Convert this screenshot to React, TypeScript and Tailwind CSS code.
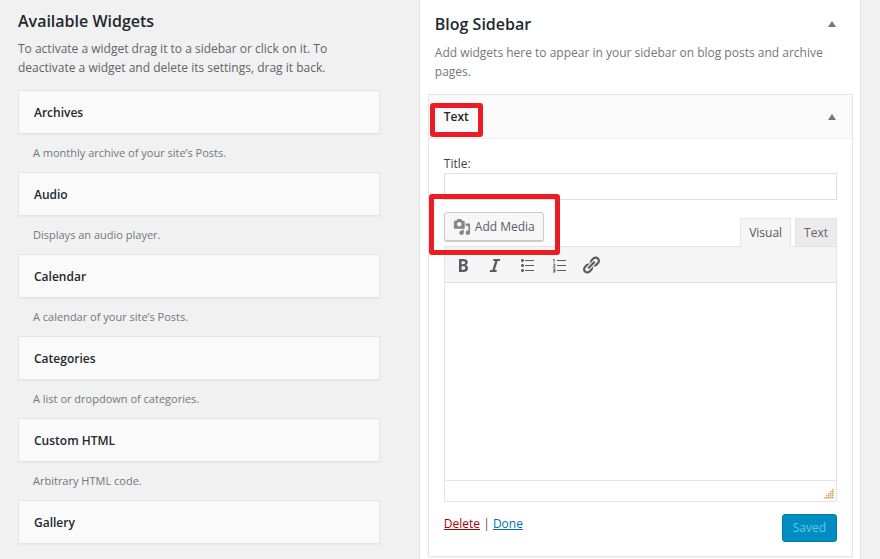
import type { ReactNode } from "react"

const widgets = [
  { name: "Archives", description: "A monthly archive of your site’s Posts." },
  { name: "Audio", description: "Displays an audio player." },
  { name: "Calendar", description: "A calendar of your site’s Posts." },
  { name: "Categories", description: "A list or dropdown of categories." },
  { name: "Custom HTML", description: "Arbitrary HTML code." },
  { name: "Gallery", description: "Displays an image gallery." },
]

const icons = {
  media:
    "M13 11V4c0-.55-.45-1-1-1h-1.67L9 1H5L3.67 3H2c-.55 0-1 .45-1 1v7c0 .55.45 1 1 1h10c.55 0 1-.45 1-1zM7 4.5c1.38 0 2.5 1.12 2.5 2.5S8.38 9.5 7 9.5 4.5 8.38 4.5 7 5.62 4.5 7 4.5zM14 6h5v10.5c0 1.38-1.12 2.5-2.5 2.5S14 17.88 14 16.5s1.12-2.5 2.5-2.5c.17 0 .34.02.5.05V9h-3V6zm-4 8.05V13h2v3.5c0 1.38-1.12 2.5-2.5 2.5S7 17.88 7 16.5 8.12 14 9.5 14c.17 0 .34.02.5.05z",
  bold: "M6 4v13h4.54c1.37 0 2.46-.33 3.26-1 .8-.66 1.2-1.58 1.2-2.77 0-.84-.17-1.51-.51-2.01s-.9-.85-1.67-1.03v-.09c.57-.1 1.02-.4 1.36-.9s.51-1.13.51-1.91c0-1.14-.39-1.98-1.17-2.5C12.75 4.26 11.5 4 9.78 4H6zm2.57 5.15V6.26h1.36c.73 0 1.27.11 1.61.32.34.22.51.58.51 1.07 0 .54-.16.92-.47 1.15s-.82.35-1.51.35h-1.5zm0 2.19h1.6c1.44 0 2.16.53 2.16 1.61 0 .6-.17 1.05-.51 1.34s-.86.43-1.57.43H8.57v-3.38z",
  italic: "M14.78 6h-2.13l-2.8 9h2.12l-.62 2H4.6l.62-2h2.14l2.8-9H8.03l.62-2h6.75z",
  bullets:
    "M5.5 7C4.67 7 4 6.33 4 5.5 4 4.68 4.67 4 5.5 4 6.32 4 7 4.68 7 5.5 7 6.33 6.32 7 5.5 7zM8 5h9v1H8V5zm-2.5 7c-.83 0-1.5-.67-1.5-1.5C4 9.68 4.67 9 5.5 9c.82 0 1.5.68 1.5 1.5 0 .83-.68 1.5-1.5 1.5zM8 10h9v1H8v-1zm-2.5 7c-.83 0-1.5-.67-1.5-1.5 0-.82.67-1.5 1.5-1.5.82 0 1.5.68 1.5 1.5 0 .83-.68 1.5-1.5 1.5zM8 15h9v1H8v-1z",
  numbers:
    "M4.4 4h1.1v3.4h-.9V5h-.6v-.7zM8 5h9v1H8zM4 8.7h2.3v2L5 11.8h1.4v.8H3.9v-.8l1.5-1.4v-.9H4zM8 10h9v1H8zM4 13.6h2.4v3.8H4v-.8h1.5v-.7H4.4v-.8h1.1v-.7H4zM8 15h9v1H8z",
  link: "M17.74 2.76c1.68 1.69 1.68 4.41 0 6.1l-1.53 1.52c-1.12 1.12-2.7 1.47-4.14 1.09l2.62-2.61.76-.77.76-.76c.84-.84.84-2.2 0-3.04-.84-.85-2.2-.85-3.04 0l-.77.76-3.38 3.38c-.37-1.44-.02-3.02 1.1-4.14l1.52-1.53c1.69-1.68 4.42-1.68 6.1 0zM8.59 13.43l5.34-5.34c.42-.42.42-1.1 0-1.52-.44-.43-1.13-.39-1.53 0l-5.33 5.34c-.42.42-.42 1.1 0 1.52.44.43 1.13.39 1.52 0zm-.76 2.29l4.14-4.15c.38 1.44.03 3.02-1.09 4.14l-1.52 1.53c-1.69 1.68-4.41 1.68-6.1 0-1.68-1.68-1.68-4.42 0-6.1l1.53-1.52c1.12-1.12 2.7-1.47 4.14-1.1l-4.14 4.15c-.85.84-.85 2.2 0 3.05.84.84 2.2.84 3.04 0z",
}

const tools = [
  { label: "Bold", path: icons.bold },
  { label: "Italic", path: icons.italic },
  { label: "Bulleted list", path: icons.bullets },
  { label: "Numbered list", path: icons.numbers },
  { label: "Insert link", path: icons.link },
]

function Icon({ path, className }: { path: string; className: string }) {
  return (
    <svg viewBox="0 0 20 20" fill="currentColor" className={className} aria-hidden="true">
      <path d={path} />
    </svg>
  )
}

function Toggle({ label }: { label: string }) {
  return (
    <button type="button" aria-label={label} aria-expanded="true" className="p-1 text-[#72777c]">
      <svg viewBox="0 0 8 6" fill="currentColor" className="h-[6px] w-2">
        <path d="M4 0l4 6H0z" />
      </svg>
    </button>
  )
}

// Red frame drawn around the thing the reader should click
function Highlight({ className, children }: { className: string; children: ReactNode }) {
  return (
    <div className="relative">
      {children}
      <span
        className={`pointer-events-none absolute rounded-[3px] border-5 border-[#ed1c24] ${className}`}
      />
    </div>
  )
}

function AvailableWidgets() {
  return (
    <section className="pt-[9px]">
      <h2 className="text-base leading-6 font-semibold text-[#23282d]">Available Widgets</h2>
      <p className="mt-[6px] max-w-[320px] leading-[19px] text-[#606468]">
        To activate a widget drag it to a sidebar or click on it. To deactivate a widget and delete
        its settings, drag it back.
      </p>
      <ul className="mt-[13px]">
        {widgets.map(widget => (
          <li key={widget.name} className="h-[82px]">
            <h3 className="border border-[#e5e5e5] bg-[#fafafa] px-[15px] pt-3 pb-[10px] leading-5 font-semibold text-[#23282d] shadow-[0_1px_1px_rgba(0,0,0,0.04)]">
              {widget.name}
            </h3>
            <p className="px-[15px] pt-[10px] text-[11px] leading-[18px] text-[#72777c]">
              {widget.description}
            </p>
          </li>
        ))}
      </ul>
    </section>
  )
}

function Editor() {
  return (
    <div>
      <div className="flex items-end justify-between">
        <Highlight className="-top-[18px] -right-4 -bottom-[14px] -left-[15px]">
          <button
            type="button"
            className="flex h-[29px] items-center gap-1 rounded-[3px] border border-[#ccc] bg-[#f7f7f7] px-2 text-[#555d66] shadow-[0_1px_0_#ccc]"
          >
            <Icon path={icons.media} className="h-[18px] w-[18px] text-[#82878c]" />
            Add Media
          </button>
        </Highlight>
        <div className="-mb-[6px] flex gap-1" role="tablist">
          <button
            type="button"
            role="tab"
            aria-selected="true"
            className="relative z-10 h-[29px] border border-b-0 border-[#e5e5e5] bg-[#f5f5f5] px-2 text-[#555]"
          >
            Visual
          </button>
          <button
            type="button"
            role="tab"
            aria-selected="false"
            className="h-7 border border-b-0 border-[#e5e5e5] bg-[#ebebeb] px-2 text-[#666]"
          >
            Text
          </button>
        </div>
      </div>
      <div className="mt-[5px] border border-[#e5e5e5]">
        <div className="flex h-9 items-center gap-3 border-b border-[#dedede] bg-[#f5f5f5] px-2 text-[#555d66]">
          {tools.map(tool => (
            <button key={tool.label} type="button" aria-label={tool.label}>
              <Icon path={tool.path} className="h-5 w-5" />
            </button>
          ))}
        </div>
        <textarea
          aria-label="Widget content"
          className="block h-[197px] w-full resize-none bg-white p-2 outline-none"
        />
        <div className="flex h-[21px] items-end justify-end border-t border-[#e5e5e5] p-[2px]">
          <svg viewBox="0 0 10 10" className="h-[10px] w-[10px]" aria-hidden="true">
            <path d="M8 0h2v10H0V8h2V6h2V4h2V2h2z" fill="#ead9bd" />
            <path
              d="M8 0h1v1H8zM6 2h1v1H6zM8 2h1v1H8zM4 4h1v1H4zM6 4h1v1H6zM8 4h1v1H8zM2 6h1v1H2zM4 6h1v1H4zM6 6h1v1H6zM8 6h1v1H8zM0 8h1v1H0zM2 8h1v1H2zM4 8h1v1H4zM6 8h1v1H6zM8 8h1v1H8z"
              fill="#d9a04e"
            />
          </svg>
        </div>
      </div>
    </div>
  )
}

function TextWidget() {
  return (
    <article className="border border-[#e5e5e5] bg-white shadow-[0_1px_1px_rgba(0,0,0,0.04)]">
      <header className="flex h-11 items-center justify-between border-b border-[#eee] bg-[#fafafa] pr-3 pl-[15px]">
        <Highlight className="-top-[4px] -right-[14px] -bottom-[10px] -left-[14px]">
          <h3 className="leading-5 font-semibold text-[#23282d]">Text</h3>
        </Highlight>
        <Toggle label="Toggle text widget" />
      </header>
      <div className="px-[15px] pt-4 pb-[14px]">
        <label htmlFor="title" className="block leading-[18px] text-[#444]">
          Title:
        </label>
        <input
          id="title"
          type="text"
          className="mb-3 block h-[27px] w-full border border-[#ddd] bg-white px-1 outline-none"
        />
        <Editor />
        <footer className="mt-3 flex items-center justify-between">
          <p className="-mt-2 leading-5 text-[#555]">
            <a href="#delete" className="text-[#a00] underline">
              Delete
            </a>{" "}
            |{" "}
            <a href="#done" className="text-[#0073aa] underline">
              Done
            </a>
          </p>
          <button
            type="button"
            disabled
            className="h-7 rounded-[3px] border border-[#007cb2] bg-[#008ec2] px-[10px] text-[#66c6e4]"
          >
            Saved
          </button>
        </footer>
      </div>
    </article>
  )
}

function BlogSidebar() {
  return (
    <section className="border-x border-[#e5e5e5] bg-white pt-3 pr-[7px] pl-2">
      <div className="pr-[13px] pl-[7px]">
        <div className="flex items-center justify-between">
          <h2 className="text-base leading-6 font-semibold text-[#23282d]">Blog Sidebar</h2>
          <Toggle label="Toggle blog sidebar" />
        </div>
        <p className="mt-[7px] leading-[19px] text-[#72777c]">
          Add widgets here to appear in your sidebar on blog posts and archive pages.
        </p>
      </div>
      <div className="pt-[13px]">
        <TextWidget />
      </div>
    </section>
  )
}

export default function App() {
  return (
    <main className="grid h-screen grid-cols-[9fr_11fr] gap-[39px] overflow-hidden bg-[#f1f1f1] pr-[19px] pl-[18px] font-['Open_Sans','Noto_Sans',sans-serif] text-xs">
      <AvailableWidgets />
      <BlogSidebar />
    </main>
  )
}
